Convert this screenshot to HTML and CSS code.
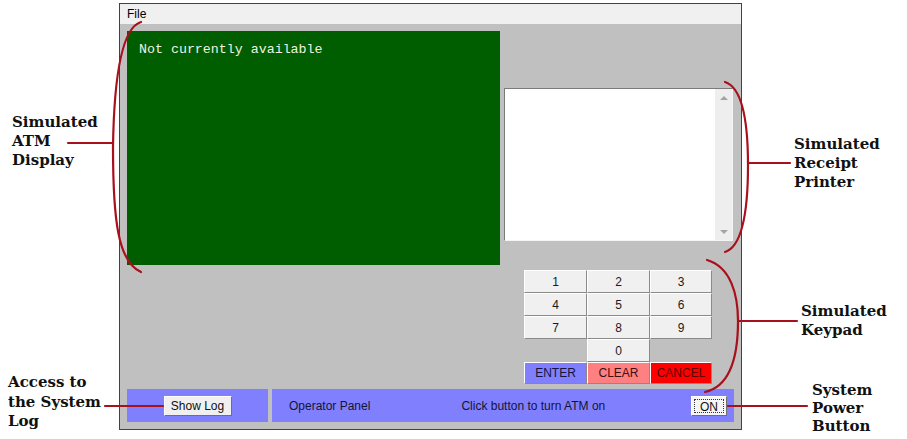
FILE: index.html
```html
<!DOCTYPE html>
<html>
<head>
<meta charset="utf-8">
<link rel="stylesheet" href="styles.css">
</head>
<body>
<div class="page">
  <div class="window">
    <div class="menubar"><span class="menu-item">File</span></div>
    <div class="content">
      <div class="display">Not currently available</div>
      <div class="printer-col">
        <div class="receipt">
          <div class="paper"></div>
          <div class="scrollbar">
            <span class="arrow up"></span>
            <span class="arrow down"></span>
          </div>
        </div>
      </div>
      <div class="keypad">
        <button class="key">1</button>
        <button class="key">2</button>
        <button class="key">3</button>
        <button class="key">4</button>
        <button class="key">5</button>
        <button class="key">6</button>
        <button class="key">7</button>
        <button class="key">8</button>
        <button class="key">9</button>
        <button class="key zero">0</button>
        <button class="key enter">ENTER</button>
        <button class="key clear">CLEAR</button>
        <button class="key cancel">CANCEL</button>
      </div>
      <div class="panels">
        <div class="log-panel"><button class="btn">Show Log</button></div>
        <div class="operator-panel">
          <span class="op-title">Operator Panel</span>
          <span class="op-status">Click button to turn ATM on</span>
          <button class="btn on-btn"><span class="focus">ON</span></button>
        </div>
      </div>
    </div>
  </div>

  <div class="note note-atm">Simulated<br>ATM<br>Display</div>
  <div class="note note-receipt">Simulated<br>Receipt<br>Printer</div>
  <div class="note note-keypad">Simulated<br>Keypad</div>
  <div class="note note-power">System<br>Power<br>Button</div>
  <div class="note note-log">Access to<br>the System<br>Log</div>

  <svg class="callouts" width="907" height="439" viewBox="0 0 907 439">
    <g fill="none" stroke="#a8101c" stroke-width="2.2" stroke-linecap="round">
      <path d="M141,22 C121,28 114,80 113,147 C113,220 118,262 141,272"/>
      <path d="M68,143 H113"/>
      <path d="M725,82 C744,88 748,130 748,165 C748,205 744,246 725,252"/>
      <path d="M748,163 H790"/>
      <path d="M707,260 C731,267 738,295 738,321 C738,352 732,386 705,392"/>
      <path d="M738,321 H797"/>
      <path d="M728,406 H807"/>
      <path d="M105,406 H163"/>
    </g>
  </svg>
</div>
</body>
</html>
```

FILE: styles.css
```css
* { box-sizing: border-box; }

html, body {
  margin: 0;
  background: #ffffff;
}

.page {
  position: relative;
  width: 907px;
  height: 439px;
  padding: 3px 0 0 119px;
  overflow: hidden;
}

.window {
  width: 623px;
  height: 427px;
  border: 1px solid #34474f;
  background: #c0c0c0;
  display: flex;
  flex-direction: column;
}

.menubar {
  height: 20px;
  background: #f0f0f0;
  padding-left: 7px;
  display: flex;
  align-items: center;
  font-family: "Liberation Sans", Arial, sans-serif;
  font-size: 12px;
  color: #000;
}

.content {
  flex: 1;
  display: grid;
  grid-template-columns: 373px 229px;
  grid-template-rows: 234px 114px 33px;
  column-gap: 4px;
  row-gap: 5px;
  padding: 7px 8px 7px 7px;
}

.display {
  background: #005e00;
  color: #eef2e4;
  font-family: "Liberation Mono", "Courier New", monospace;
  font-size: 13.3px;
  line-height: 15px;
  padding: 11px 12px;
}

.printer-col {
  padding-top: 57px;
}

.receipt {
  height: 153px;
  display: flex;
  background: #ffffff;
  border-top: 1px solid #7a7a7a;
  border-left: 1px solid #7a7a7a;
  border-right: 1px solid #f4f4f4;
  border-bottom: 1px solid #f4f4f4;
}

.paper {
  flex: 1;
  background: #ffffff;
}

.scrollbar {
  width: 17px;
  background: #eeeeee;
  display: flex;
  flex-direction: column;
  justify-content: space-between;
  align-items: center;
  padding: 7px 0 6px;
}

.arrow {
  width: 0;
  height: 0;
  border-left: 4px solid transparent;
  border-right: 4px solid transparent;
}

.arrow.up { border-bottom: 4px solid #a4a4a4; }
.arrow.down { border-top: 4px solid #a4a4a4; }

.keypad {
  grid-column: 2;
  margin-left: 20px;
  width: 188px;
  display: grid;
  grid-template-columns: 63px 63px 62px;
  grid-template-rows: 23px 23px 23px 23px 22px;
}

.key {
  margin: 0;
  padding: 0;
  background: #f0f0f0;
  border: 1px solid;
  border-color: #ffffff #8a8a8a #8a8a8a #ffffff;
  font-family: "Liberation Sans", Arial, sans-serif;
  font-size: 12px;
  color: #1a1a1a;
}

.key.zero { grid-column: 2; grid-row: 4; }
.key.enter { grid-column: 1; grid-row: 5; background: #8080ff; color: #14143c; }
.key.clear { grid-column: 2; grid-row: 5; background: #ff8080; color: #3a1010; }
.key.cancel { grid-column: 3; grid-row: 5; background: #ff0000; color: #5a0000; }

.panels {
  grid-column: 1 / -1;
  width: 607px;
  display: flex;
  gap: 4px;
}

.log-panel {
  width: 141px;
  background: #8080ff;
  display: flex;
  align-items: center;
  justify-content: center;
}

.btn {
  margin: 0;
  font-family: "Liberation Sans", Arial, sans-serif;
  font-size: 12px;
  color: #111;
  background: #f0f0f0;
  border: 1px solid;
  border-color: #ffffff #707070 #707070 #ffffff;
}

.log-panel .btn {
  width: 68px;
  height: 20px;
  padding: 0;
  margin-top: 1px;
}

.operator-panel {
  flex: 1;
  background: #8080ff;
  display: flex;
  align-items: center;
  padding: 0 7px 0 17px;
  font-family: "Liberation Sans", Arial, sans-serif;
  font-size: 12px;
  color: #141432;
}

.op-status {
  margin-left: 91px;
}

.on-btn {
  margin-left: auto;
  width: 36px;
  height: 20px;
  padding: 2px;
  background: #f6f6f6;
}

.on-btn .focus {
  display: block;
  height: 100%;
  border: 1px dotted #333;
  line-height: 14px;
}

.note {
  position: absolute;
  font-family: "DejaVu Serif", "Liberation Serif", serif;
  font-weight: bold;
  font-size: 15px;
  line-height: 19px;
  color: #111;
}

.note-atm { left: 12px; top: 113px; }
.note-receipt { left: 794px; top: 135px; }
.note-keypad { left: 801px; top: 302px; }
.note-power { left: 812px; top: 381px; line-height: 18px; }
.note-log { left: 8px; top: 373px; line-height: 19.5px; }

.callouts {
  position: absolute;
  left: 0;
  top: 0;
  pointer-events: none;
}
```
